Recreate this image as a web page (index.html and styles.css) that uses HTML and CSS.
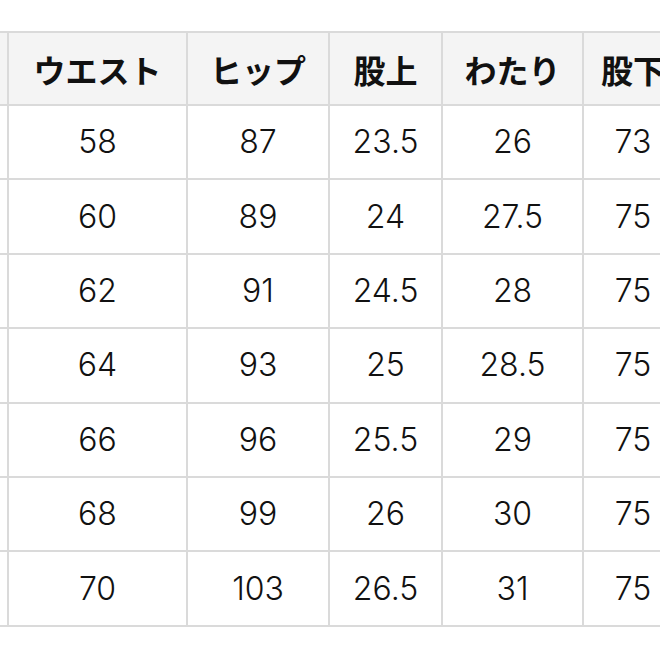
FILE: index.html
```html
<!DOCTYPE html>
<html lang="ja">
<head>
<meta charset="utf-8">
<title>サイズ表</title>
<link rel="stylesheet" href="styles.css">
</head>
<body>
<div class="frame">
  <table class="size-table">
    <colgroup>
      <col class="c0"><col class="c1"><col class="c2"><col class="c3"><col class="c4"><col class="c5">
    </colgroup>
    <thead>
      <tr><th></th><th>ウエスト</th><th>ヒップ</th><th>股上</th><th>わたり</th><th>股下</th></tr>
    </thead>
    <tbody>
      <tr><td></td><td>58</td><td>87</td><td>23.5</td><td>26</td><td>73</td></tr>
      <tr><td></td><td>60</td><td>89</td><td>24</td><td>27.5</td><td>75</td></tr>
      <tr><td></td><td>62</td><td>91</td><td>24.5</td><td>28</td><td>75</td></tr>
      <tr><td></td><td>64</td><td>93</td><td>25</td><td>28.5</td><td>75</td></tr>
      <tr><td></td><td>66</td><td>96</td><td>25.5</td><td>29</td><td>75</td></tr>
      <tr><td></td><td>68</td><td>99</td><td>26</td><td>30</td><td>75</td></tr>
      <tr><td></td><td>70</td><td>103</td><td>26.5</td><td>31</td><td>75</td></tr>
    </tbody>
  </table>
</div>
</body>
</html>
```
FILE: styles.css
```css
html, body {
  margin: 0;
  padding: 0;
  background: #ffffff;
}
.frame {
  width: 660px;
  height: 660px;
  overflow: hidden;
  padding-top: 31px;
  box-sizing: border-box;
}
.size-table {
  border-collapse: collapse;
  table-layout: fixed;
  width: 795px;
  margin-left: -113px;
}
.c0 { width: 120px; }
.c1 { width: 179px; }
.c2 { width: 142px; }
.c3 { width: 113px; }
.c4 { width: 141px; }
.c5 { width: 100px; }
.size-table th,
.size-table td {
  border: 2px solid #dadada;
  text-align: center;
  padding: 0;
}
.size-table th {
  height: 71px;
  background: #f4f4f4;
  font-family: "Noto Sans CJK JP", sans-serif;
  font-size: 32px;
  font-weight: 700;
  color: #111111;
  line-height: 1;
}
.size-table td {
  height: 72.4px;
  font-family: Inter, "Liberation Sans", sans-serif;
  font-size: 32px;
  font-weight: 300;
  color: #111111;
  line-height: 1;
  padding-top: 0;
}
```
